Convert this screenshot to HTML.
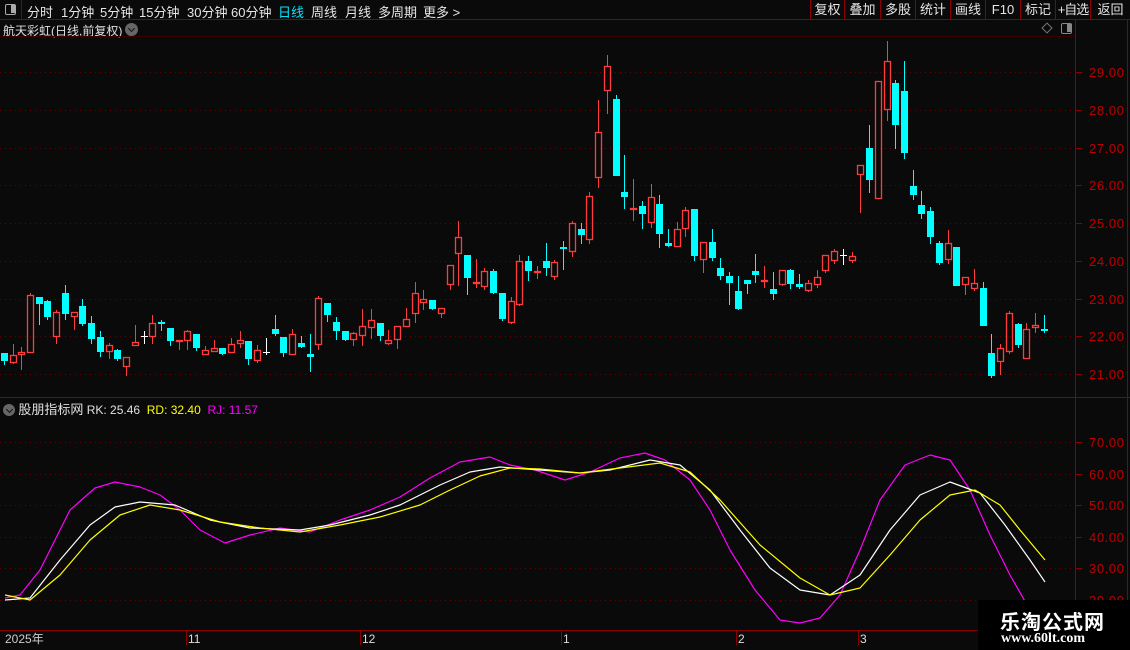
<!DOCTYPE html>
<html><head><meta charset="utf-8"><style>
*{margin:0;padding:0;box-sizing:border-box}
body{width:1130px;height:650px;background:#0a0a0a;overflow:hidden;position:relative;font-family:"Liberation Sans","Noto Sans CJK SC",sans-serif;color:#ddd}
.top{position:absolute;left:0;top:0;width:1130px;height:20px;border-bottom:1px solid #8b0000;font-size:13px}
.top span{position:absolute;top:2px;color:#e6e6e6;white-space:nowrap}
.btn{position:absolute;top:0;height:20px;border-left:1px solid #8b0000;color:#e6e6e6;font-size:13px;text-align:center;line-height:19px;white-space:nowrap;overflow:hidden}
.lbl{position:absolute;font-size:12px}
.ax{position:absolute;left:1089px;font-size:13px;letter-spacing:0.6px;color:#c00000}
.chev{display:inline-block;width:13px;height:13px;border-radius:50%;background:#666;position:relative}
.chev:after{content:"";position:absolute;left:4px;top:3px;width:4px;height:4px;border-right:1.5px solid #111;border-bottom:1.5px solid #111;transform:rotate(45deg)}
</style></head><body>
<div class="top">
<div style="position:absolute;left:0;top:0;width:22px;height:20px;border-right:1px solid #8b0000"><div style="position:absolute;left:5px;top:4px;width:11px;height:11px;border:1.5px solid #aaa;border-radius:2px"><div style="position:absolute;right:0;top:0;width:4px;height:8px;background:#aaa"></div></div></div>
<span style="left:27px">分时</span><span style="left:61px">1分钟</span><span style="left:100px">5分钟</span><span style="left:139px">15分钟</span><span style="left:187px">30分钟</span><span style="left:231px">60分钟</span><span style="left:278px;color:#00e5ff">日线</span><span style="left:311px">周线</span><span style="left:345px">月线</span><span style="left:378px">多周期</span><span style="left:423px">更多 &gt;</span>
<div class="btn" style="left:810px;width:34px">复权</div><div class="btn" style="left:844px;width:36px">叠加</div><div class="btn" style="left:880px;width:35px">多股</div><div class="btn" style="left:915px;width:35px">统计</div><div class="btn" style="left:950px;width:35px">画线</div><div class="btn" style="left:985px;width:35px">F10</div><div class="btn" style="left:1020px;width:35px">标记</div><div class="btn" style="left:1055px;width:35px;letter-spacing:-1px">+自选</div><div class="btn" style="left:1090px;width:40px">返回</div>
</div>
<div class="lbl" style="left:3px;top:22px;font-size:12px;color:#e0e0e0">航天彩虹(日线,前复权)</div>
<div class="chev" style="position:absolute;left:125px;top:23px"></div>
<div style="position:absolute;left:1043px;top:24px;width:8px;height:8px;border:1px solid #777;transform:rotate(45deg)"></div>
<div style="position:absolute;left:1061px;top:23px;width:11px;height:11px;border:1.5px solid #888;border-radius:2px"><div style="position:absolute;right:0;top:0;width:4px;height:8px;background:#888"></div></div>
<div class="lbl" style="left:3px;top:399px;font-size:12px"><span class="chev" style="width:12px;height:12px;vertical-align:-2px"></span> <span style="color:#e0e0e0;font-size:13px">股朋指标网</span> <span style="color:#e0e0e0">RK: 25.46</span> &nbsp;<span style="color:#ffff00">RD: 32.40</span> &nbsp;<span style="color:#ff00ff">RJ: 11.57</span></div>
<svg id="s" width="1130" height="650" style="position:absolute;left:0;top:0">
<g stroke="#8b0000" stroke-width="1">
<line x1="1075.5" y1="20" x2="1075.5" y2="650"/><line x1="1127.5" y1="20" x2="1127.5" y2="650"/>
<line x1="0" y1="397.5" x2="1130" y2="397.5"/><line x1="0" y1="630.5" x2="1130" y2="630.5"/>
<line x1="0" y1="36.5" x2="1075" y2="36.5" stroke="#3a0000"/>
</g>
<g id="grid" stroke="#6a0000" stroke-dasharray="1,4"></g>
<g id="k"></g>
<g fill="none" stroke-width="1.2" stroke-linejoin="round">
<polyline stroke="#ff00ff" points="5,598 20,595 40,570 70,510 95,488 115,482 140,487 160,495 180,510 200,530 225,543 250,535 280,528 310,532 340,520 370,510 400,497 430,478 460,462 490,457 510,465 535,470 565,480 590,472 620,458 645,453 665,460 690,480 710,510 730,550 755,590 780,620 800,623 820,618 840,595 860,550 880,500 905,465 930,455 950,460 970,490 990,535 1010,575 1030,610 1045,632"/>
<polyline stroke="#ffffff" points="5,600 30,598 60,560 90,525 115,507 140,502 175,505 210,520 250,528 300,530 330,525 370,515 400,505 440,485 470,472 500,467 540,470 580,473 610,470 650,460 680,465 710,490 740,530 770,568 800,590 830,595 860,575 890,530 920,495 950,482 980,493 1005,525 1030,560 1045,582"/>
<polyline stroke="#ffff00" points="5,595 30,600 60,575 90,540 120,515 150,505 180,510 220,522 260,528 300,532 340,525 380,517 420,505 450,490 480,476 510,468 540,469 580,473 620,468 660,463 690,472 720,500 760,545 800,578 830,595 860,588 890,555 920,520 950,495 975,490 1000,505 1020,530 1045,560"/>
</g>
<g font-size="12" fill="#ddd" font-family="Liberation Sans,Noto Sans CJK SC,sans-serif">
<text x="5" y="643" fill="#ccc">2025年</text><text x="188" y="643">11</text><text x="362" y="643">12</text><text x="563" y="643">1</text><text x="738" y="643">2</text><text x="860" y="643">3</text>
</g>
<g stroke="#8b0000"><line x1="186.5" y1="631" x2="186.5" y2="645"/><line x1="360.5" y1="631" x2="360.5" y2="645"/><line x1="561.5" y1="631" x2="561.5" y2="645"/><line x1="736.5" y1="631" x2="736.5" y2="645"/><line x1="858.5" y1="631" x2="858.5" y2="645"/></g>
</svg>
<div id="ax"></div>
<div style="position:absolute;left:978px;top:600px;width:152px;height:50px;background:#000">
<div style="position:absolute;left:22px;top:6px;font-size:20px;font-weight:bold;color:#fff;font-family:'Noto Sans CJK SC',sans-serif;letter-spacing:1px">乐淘公式网</div>
<div style="position:absolute;left:23px;top:31px;font-size:14px;font-weight:bold;color:#fff;font-family:'Liberation Serif',serif">www.60lt.com</div>
</div>
<script>
var ns="http://www.w3.org/2000/svg";
function el(p,t,a){var e=document.createElementNS(ns,t);for(var k in a)e.setAttribute(k,a[k]);p.appendChild(e);return e;}
var g=document.getElementById('grid'),ax=document.getElementById('ax'),h='';
for(var p=21;p<=29;p++){var y=Math.round(72+(29-p)*37.75)+.5;el(g,'line',{x1:0,y1:y,x2:1075,y2:y});el(g,'line',{x1:1075,y1:y,x2:1082,y2:y,'stroke-dasharray':'none',stroke:'#8b0000'});h+='<div class="ax" style="top:'+(y-8)+'px">'+p+'.00</div>';}
for(var v=20;v<=70;v+=10){var y=Math.round(442+(70-v)*3.15)+.5;el(g,'line',{x1:0,y1:y,x2:1075,y2:y});el(g,'line',{x1:1075,y1:y,x2:1082,y2:y,'stroke-dasharray':'none',stroke:'#8b0000'});h+='<div class="ax" style="top:'+(y-8)+'px">'+v+'.00</div>';}
ax.innerHTML=h;
var D=[[4,'c',353,361,353,365],[13,'r',355,363,344,364],[21,'r',352,355,347,370],[30,'r',295,353,293,353],[39,'c',297,304,297,325],[47,'c',301,317,300,320],[56,'r',312,337,310,344],[65,'c',293,314,285,320],[74,'r',312,317,312,330],[82,'c',306,324,299,326],[91,'c',323,339,316,344],[100,'c',337,352,331,357],[109,'r',345,352,343,359],[117,'c',350,359,349,361],[126,'r',357,367,357,376],[135,'r',342,346,325,346],[144,'w',336,336,331,344],[152,'r',323,337,315,344],[161,'c',322,324,320,331],[170,'c',328,341,328,346],[179,'r',340,342,340,350],[187,'r',331,341,330,350],[196,'c',334,348,334,351],[205,'r',350,355,346,355],[214,'r',348,352,340,352],[222,'c',348,354,348,355],[231,'r',344,353,338,353],[240,'r',340,344,331,348],[248,'c',341,359,341,365],[257,'r',350,361,345,363],[266,'w',352,352,338,355],[275,'c',329,334,315,336],[283,'c',337,353,337,357],[292,'r',334,355,329,355],[301,'c',343,347,336,348],[310,'c',354,357,334,372],[318,'r',298,345,296,350],[327,'c',303,315,303,322],[336,'c',322,331,317,340],[345,'c',331,340,331,341],[353,'r',333,340,332,346],[362,'r',326,336,309,346],[371,'r',320,328,309,339],[380,'c',323,336,323,341],[388,'r',340,344,330,345],[397,'r',326,340,326,349],[406,'r',319,327,308,327],[415,'r',293,314,282,323],[423,'r',299,303,290,310],[432,'c',300,309,300,310],[441,'r',308,314,308,318],
[450,'r',265,285,265,290],[458,'r',237,254,221,286],[467,'c',255,278,255,295],[476,'r',282,284,259,288],[484,'r',271,287,268,290],[493,'c',271,293,269,294],[502,'c',293,319,293,321],[511,'r',301,323,297,324],[519,'r',261,305,255,306],[528,'c',261,271,256,281],[537,'r',271,273,266,279],[546,'c',261,268,243,276],[554,'r',262,277,260,280],[563,'c',247,249,241,270],[572,'r',223,252,221,257],[581,'c',229,235,223,244],[589,'r',196,240,192,244],[598,'r',132,178,100,188],[607,'r',66,91,55,114],[616,'c',99,176,95,176],[624,'c',192,197,155,209],[633,'r',208,210,179,221],[642,'c',206,214,201,229],[651,'r',197,223,184,228],[659,'c',204,234,195,248],[668,'c',243,246,229,247],[677,'r',229,247,222,247],[685,'r',210,229,207,237],[694,'c',209,256,209,261],[703,'r',242,260,242,273],[712,'c',242,258,229,261],[720,'c',268,276,258,280],[729,'c',276,283,272,305],[738,'c',291,309,276,310],[747,'c',280,284,280,294],[755,'c',271,275,254,283],[764,'r',280,282,266,288],[773,'c',289,294,272,300],[782,'r',270,285,270,286],[790,'c',270,284,269,289],[799,'c',284,287,274,289],[808,'r',283,291,280,292],[817,'r',277,285,270,288],[825,'r',255,271,255,273],[834,'r',251,261,249,264],[843,'w',255,255,249,265],[852,'r',256,261,252,263],
[860,'r',165,175,165,213],[869,'c',148,180,125,193],[878,'r',81,199,81,199],[887,'r',61,110,41,121],[895,'c',83,125,80,149],[904,'c',91,153,61,159],[913,'c',186,195,170,200],[921,'c',205,214,191,219],[930,'c',211,237,207,244],[939,'c',243,263,241,265],[948,'r',243,260,230,264],[956,'c',247,286,247,286],[965,'r',277,285,277,295],[974,'r',283,289,269,291],[983,'c',288,326,282,326],[991,'c',353,376,334,378],[1000,'r',348,362,344,375],[1009,'r',313,352,311,354],[1018,'c',324,345,323,348],[1026,'r',329,359,323,359],[1035,'r',325,328,313,333],[1044,'c',329,330,315,333]];
var k=document.getElementById('k');
D.forEach(function(d){var x=d[0],t=d[1],a=d[2],b=d[3],hi=d[4],lo=d[5];
var col=t=='r'?'#ff3c3c':(t=='c'?'#00ffff':'#ffffff');
if(t=='w'){el(k,'line',{x1:x+.5,y1:hi,x2:x+.5,y2:lo,stroke:col});el(k,'line',{x1:x-3,y1:a+.5,x2:x+4,y2:a+.5,stroke:col});return;}
if(hi<a)el(k,'line',{x1:x+.5,y1:hi,x2:x+.5,y2:a,stroke:col});
if(lo>b)el(k,'line',{x1:x+.5,y1:b,x2:x+.5,y2:lo,stroke:col});
var hh=Math.max(b-a,2);
if(t=='r')el(k,'rect',{x:x-2.5,y:a+.5,width:6,height:hh-1,fill:'none',stroke:col,'stroke-width':1.3});
else el(k,'rect',{x:x-3,y:a,width:7,height:hh,fill:col});
});
</script>
</body></html>
